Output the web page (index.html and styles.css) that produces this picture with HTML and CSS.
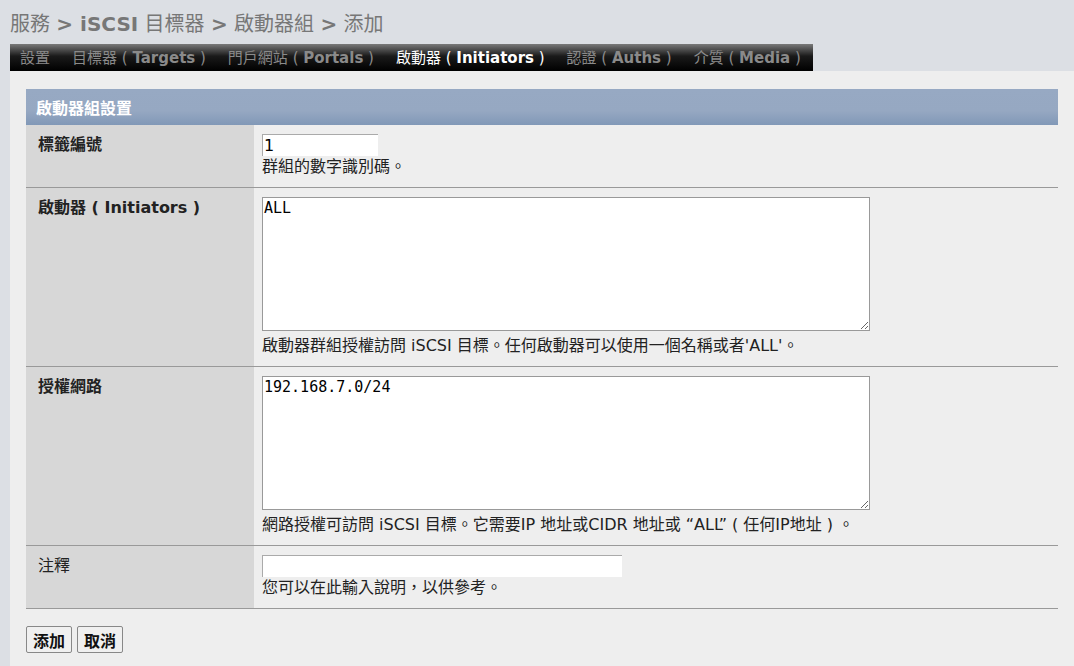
FILE: index.html
```html
<!DOCTYPE html>
<html>
<head>
	<meta charset="utf-8">
	<title>iSCSI 目標器 - 啟動器組</title>
	<link rel="stylesheet" href="styles.css">
</head>
<body>

	<h1 class="title">服務 <b>&gt; iSCSI</b> 目標器 <b>&gt;</b> 啟動器組 <b>&gt;</b> 添加</h1>

	<ul class="tabs">
		<li>設置</li>
		<li>目標器 ( <b>Targets</b> )</li>
		<li>門戶網站 ( <b>Portals</b> )</li>
		<li class="active">啟動器 ( <b>Initiators</b> )</li>
		<li>認證 ( <b>Auths</b> )</li>
		<li>介質 ( <b>Media</b> )</li>
	</ul>

	<div class="content">
		<form>
			<table class="settings">
				<tr>
					<th colspan="2" class="head">啟動器組設置</th>
				</tr>
				<tr>
					<td class="label req">標籤編號</td>
					<td class="value">
						<input type="text" class="tag" value="1">
						<p class="desc">群組的數字識別碼。</p>
					</td>
				</tr>
				<tr>
					<td class="label req">啟動器 ( <b>Initiators</b> )</td>
					<td class="value">
						<textarea>ALL</textarea>
						<p class="desc">啟動器群組授權訪問 iSCSI 目標。任何啟動器可以使用一個名稱或者'ALL'。</p>
					</td>
				</tr>
				<tr>
					<td class="label req">授權網路</td>
					<td class="value">
						<textarea>192.168.7.0/24</textarea>
						<p class="desc">網路授權可訪問 iSCSI 目標。它需要IP 地址或CIDR 地址或 “ALL” ( 任何IP地址 ) 。</p>
					</td>
				</tr>
				<tr>
					<td class="label">注釋</td>
					<td class="value">
						<input type="text" class="comment" value="">
						<p class="desc">您可以在此輸入說明，以供參考。</p>
					</td>
				</tr>
			</table>
			<div class="buttons">
				<button type="submit">添加</button>
				<button type="button">取消</button>
			</div>
		</form>
	</div>

</body>
</html>
```

FILE: styles.css
```css
*{
	margin: 0;
	padding: 0;
	box-sizing: border-box;
}
body{
	background: #dcdfe4;
	font-family: Tahoma, "DejaVu Sans", "Noto Sans CJK TC", sans-serif;
	font-size: 16px;
	color: #222;
}
.title{
	font-size: 20px;
	font-weight: normal;
	color: #777;
	padding: 8px 10px 0 10px;
	height: 44px;
}
.title b{
	font-weight: bold;
}
.tabs{
	list-style: none;
	display: flex;
	width: 803px;
	height: 27px;
	margin-left: 10px;
	padding-left: 10px;
	background: linear-gradient(#7a7a7a, #1a1a1a 45%, #000);
}
.tabs li{
	color: #8a8a8a;
	font-size: 15px;
	line-height: 28px;
	margin-right: 22px;
	white-space: nowrap;
}
.tabs li.active{
	color: #fff;
}
.content{
	background: #eeeeee;
	margin-left: 10px;
	min-height: calc(100vh - 71px);
	padding: 18px 16px 12px 16px;
}
.settings{
	width: 100%;
	border-collapse: collapse;
}
.settings .head{
	height: 36px;
	text-align: left;
	padding-left: 10px;
	color: #fff;
	font-size: 16px;
	background: linear-gradient(#97a9c3, #96a8c2 60%, #8198b7);
}
.settings td{
	border-bottom: 1px solid #999;
	vertical-align: top;
}
.label{
	width: 228px;
	background: #d7d7d7;
	padding: 9px 12px;
	line-height: 22px;
}
.label.req{
	font-weight: bold;
}
.value{
	padding: 9px 8px 9px 8px;
}
.value input{
	display: block;
	height: 22px;
	border: none;
	border-top: 1px solid #aaa;
	border-left: 1px solid #aaa;
	background: #fff;
	font-family: "DejaVu Sans", "Noto Sans CJK TC", sans-serif;
	font-size: 16px;
	padding: 0 1px;
}
.value input.tag{
	width: 116px;
}
.value input.comment{
	width: 360px;
}
.value textarea{
	display: block;
	width: 608px;
	height: 134px;
	margin-bottom: 4px;
	border: 1px solid #999;
	font-family: "DejaVu Sans Mono", monospace;
	font-size: 15px;
	padding: 1px 1px;
}
.desc{
	line-height: 22px;
}
.buttons{
	display: flex;
	gap: 5px;
	margin-top: 17px;
}
.buttons button{
	height: 27px;
	padding: 0 6px;
	border: 1px solid #888;
	border-radius: 2px;
	background: #f0f0f0;
	font-family: "Noto Sans CJK TC", sans-serif;
	font-size: 16px;
	font-weight: bold;
	color: #111;
}
```
